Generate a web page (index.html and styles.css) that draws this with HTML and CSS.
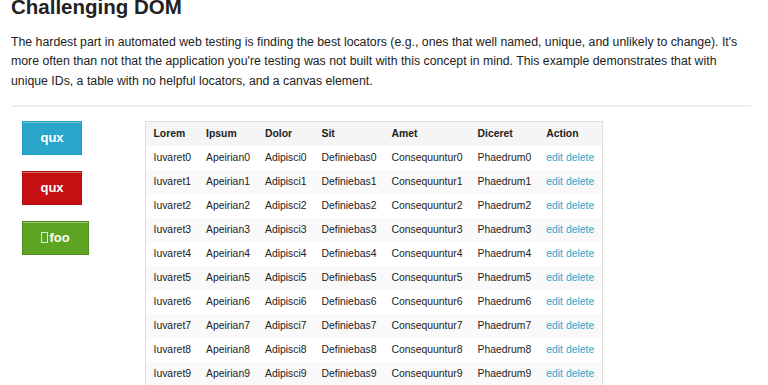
FILE: index.html
```html
<!DOCTYPE html>
<html>
<head>
<meta charset="utf-8">
<link rel="stylesheet" href="styles.css">
</head>
<body>
<div class="page">
  <h3 class="title">Challenging DOM</h3>
  <p class="intro">The hardest part in automated web testing is finding the best locators (e.g., ones that well named, unique, and unlikely to change). It's more often than not that the application you're testing was not built with this concept in mind. This example demonstrates that with unique IDs, a table with no helpful locators, and a canvas element.</p>
  <hr class="rule">
  <div class="content">
    <div class="buttons">
      <a class="button blue">qux</a>
      <a class="button red">qux</a>
      <a class="button green"><span class="tofu"></span>foo</a>
    </div>
    <table class="grid">
      <thead>
        <tr><th>Lorem</th><th>Ipsum</th><th>Dolor</th><th>Sit</th><th>Amet</th><th>Diceret</th><th>Action</th></tr>
      </thead>
      <tbody>
        <tr><td>Iuvaret0</td><td>Apeirian0</td><td>Adipisci0</td><td>Definiebas0</td><td>Consequuntur0</td><td>Phaedrum0</td><td><a>edit</a> <a>delete</a></td></tr>
        <tr><td>Iuvaret1</td><td>Apeirian1</td><td>Adipisci1</td><td>Definiebas1</td><td>Consequuntur1</td><td>Phaedrum1</td><td><a>edit</a> <a>delete</a></td></tr>
        <tr><td>Iuvaret2</td><td>Apeirian2</td><td>Adipisci2</td><td>Definiebas2</td><td>Consequuntur2</td><td>Phaedrum2</td><td><a>edit</a> <a>delete</a></td></tr>
        <tr><td>Iuvaret3</td><td>Apeirian3</td><td>Adipisci3</td><td>Definiebas3</td><td>Consequuntur3</td><td>Phaedrum3</td><td><a>edit</a> <a>delete</a></td></tr>
        <tr><td>Iuvaret4</td><td>Apeirian4</td><td>Adipisci4</td><td>Definiebas4</td><td>Consequuntur4</td><td>Phaedrum4</td><td><a>edit</a> <a>delete</a></td></tr>
        <tr><td>Iuvaret5</td><td>Apeirian5</td><td>Adipisci5</td><td>Definiebas5</td><td>Consequuntur5</td><td>Phaedrum5</td><td><a>edit</a> <a>delete</a></td></tr>
        <tr><td>Iuvaret6</td><td>Apeirian6</td><td>Adipisci6</td><td>Definiebas6</td><td>Consequuntur6</td><td>Phaedrum6</td><td><a>edit</a> <a>delete</a></td></tr>
        <tr><td>Iuvaret7</td><td>Apeirian7</td><td>Adipisci7</td><td>Definiebas7</td><td>Consequuntur7</td><td>Phaedrum7</td><td><a>edit</a> <a>delete</a></td></tr>
        <tr><td>Iuvaret8</td><td>Apeirian8</td><td>Adipisci8</td><td>Definiebas8</td><td>Consequuntur8</td><td>Phaedrum8</td><td><a>edit</a> <a>delete</a></td></tr>
        <tr><td>Iuvaret9</td><td>Apeirian9</td><td>Adipisci9</td><td>Definiebas9</td><td>Consequuntur9</td><td>Phaedrum9</td><td><a>edit</a> <a>delete</a></td></tr>
      </tbody>
    </table>
  </div>
</div>
</body>
</html>
```
FILE: styles.css
```css
html, body {
  margin: 0;
  padding: 0;
  background: #fff;
}
body {
  font-family: "Liberation Sans", Arial, sans-serif;
  color: #222;
  overflow: hidden;
  height: 385px;
}
.page {
  padding: 0 17px 0 11px;
  margin-top: -6px;
}
.title {
  margin: 0;
  font-size: 20.5px;
  line-height: 26px;
  font-weight: bold;
  color: #222;
}
.intro {
  margin: 13px 0 0 0;
  font-size: 12.3px;
  line-height: 19.3px;
  color: #222;
}
.rule {
  margin: 14px 0 0 0;
  border: 0;
  border-top: 2px solid #eee;
  height: 0;
}
.content {
  display: flex;
  align-items: flex-start;
  margin-top: 14px;
}
.buttons {
  display: flex;
  flex-direction: column;
  align-items: flex-start;
  gap: 16px;
  padding-left: 11px;
  width: 123px;
}
.button {
  display: block;
  box-sizing: border-box;
  height: 34px;
  line-height: 32px;
  width: 60px;
  text-align: center;
  color: #fff;
  font-size: 13px;
  font-weight: bold;
  border: 1px solid;
  box-shadow: inset 0 1px 0 rgba(255,255,255,0.4);
}
.blue { background: #2ba6cb; border-color: #1e9bc2; }
.red { background: #c60f13; border-color: #b00d10; }
.green { background: #5da423; border-color: #4f8e1c; width: 67px; }
.tofu {
  display: inline-block;
  width: 5px;
  height: 9px;
  border: 1px solid rgba(255,255,255,0.8);
  margin-right: 1px;
  vertical-align: -1px;
}
.grid {
  border-collapse: collapse;
  border: 1px solid #ddd;
  font-size: 10.4px;
  line-height: 14px;
}
.grid th {
  background: #f5f5f5;
  font-weight: bold;
  text-align: left;
  padding: 5px 7.5px;
  color: #222;
}
.grid td {
  padding: 5px 7.5px;
  color: #222;
  white-space: nowrap;
}
.grid tbody tr:nth-child(even) {
  background: #f9f9f9;
}
.grid a {
  color: #2ba6cb;
}
```
